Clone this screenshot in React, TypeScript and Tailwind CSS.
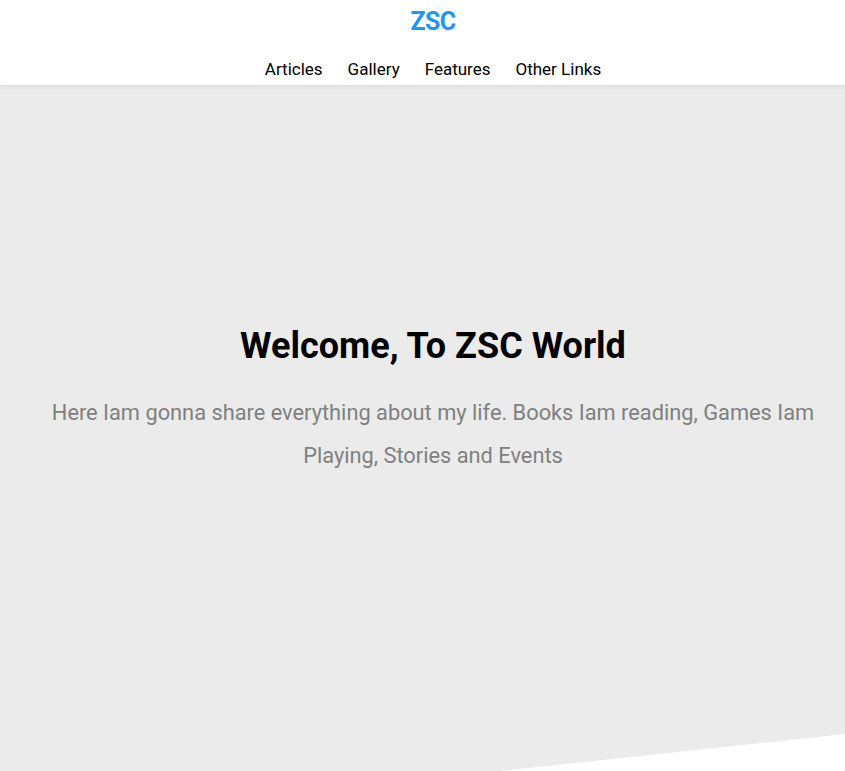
export default function App() {
  const links = ["Articles", "Gallery", "Features", "Other Links"];
  return (
    <div className="bg-white" style={{ fontFamily: "Roboto, 'Noto Sans', sans-serif" }}>
      <header className="relative z-10 h-[85px] bg-white shadow-[0_2px_4px_rgba(0,0,0,0.06)] pl-[21px] flex flex-col items-center">
        <h1 className="mt-[7px] text-[25px] leading-[30px] font-bold text-[#2196f3] tracking-tight">ZSC</h1>
        <nav className="mt-[22px] flex gap-[25px] text-[17px] leading-[20px] text-black">
          {links.map((l) => (
            <a key={l} href="#" className="hover:text-[#2196f3]">
              {l}
            </a>
          ))}
        </nav>
      </header>
      <section className="h-[686px] bg-[#ebebeb] pl-[21px] pt-[240px] [clip-path:polygon(0_0,100%_0,100%_649px,500px_100%,0_100%)]">
        <div className="flex flex-col items-center text-center">
          <h2 className="text-[36px] leading-[43px] font-bold text-black">Welcome, To ZSC World</h2>
          <p className="mt-[23px] w-[790px] text-[21.8px] leading-[43px] text-[#808080]">
            Here Iam gonna share everything about my life. Books Iam reading, Games Iam Playing, Stories and Events
          </p>
        </div>
      </section>
    </div>
  );
}
